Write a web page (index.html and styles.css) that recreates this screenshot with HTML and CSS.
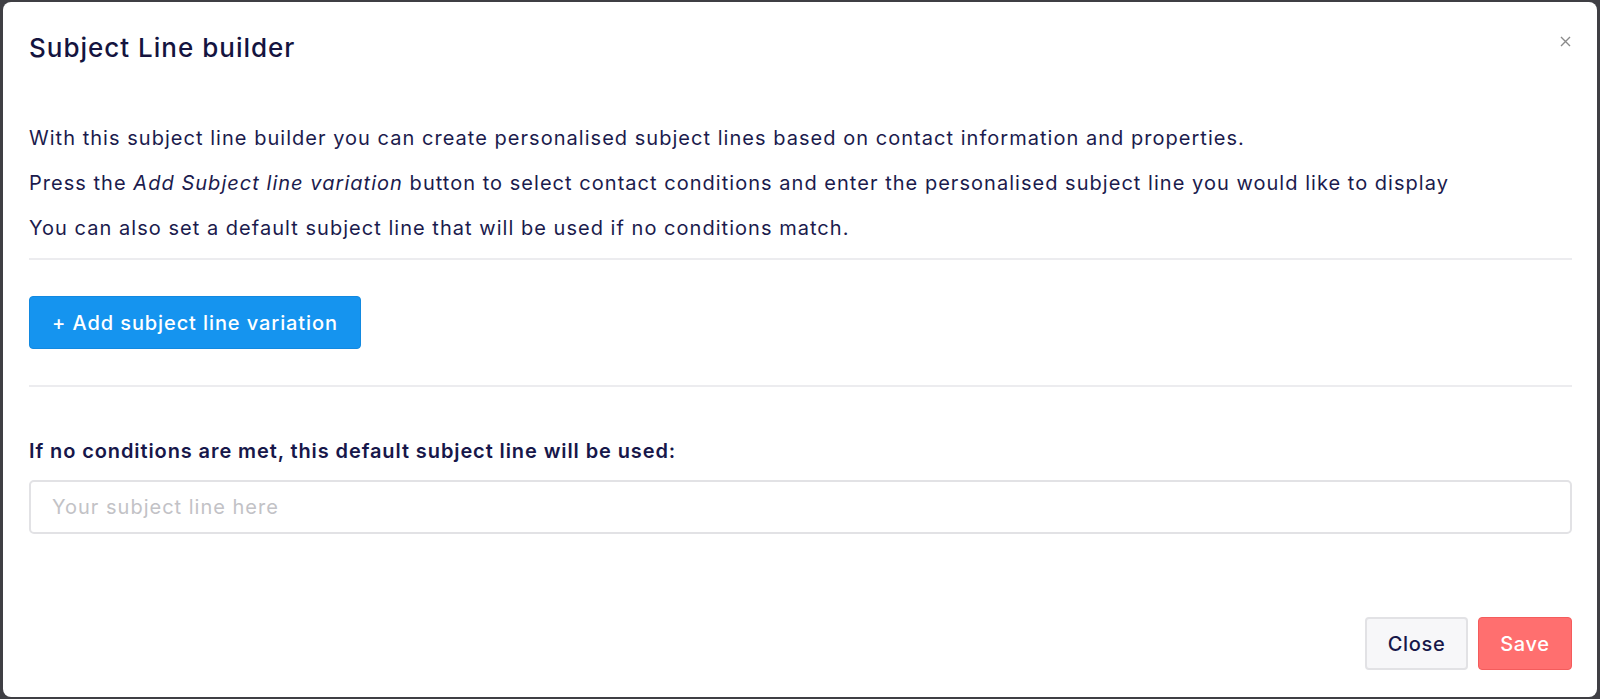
FILE: index.html
```html
<!DOCTYPE html>
<html lang="en">
<head>
<meta charset="utf-8">
<title>Subject Line builder</title>
<link rel="stylesheet" href="styles.css">
</head>
<body>
<div class="modal">
  <div class="modal-header">
    <h2 class="modal-title">Subject Line builder</h2>
    <button class="close" aria-label="Close">
      <svg width="11" height="11" viewBox="0 0 11 11"><path d="M1 1L10 10M10 1L1 10" stroke="#8a8a8a" stroke-width="1.4" fill="none"/></svg>
    </button>
  </div>
  <div class="modal-body">
    <p class="intro">With this subject line builder you can create personalised subject lines based on contact information and properties.</p>
    <p class="intro">Press the <em>Add Subject line variation</em> button to select contact conditions and enter the personalised subject line you would like to display</p>
    <p class="intro">You can also set a default subject line that will be used if no conditions match.</p>
    <hr class="divider">
    <div class="actions">
      <button class="btn btn-primary">+ Add subject line variation</button>
    </div>
    <hr class="divider">
    <label class="field-label" for="default-subject">If no conditions are met, this default subject line will be used:</label>
    <input class="field-input" id="default-subject" type="text" placeholder="Your subject line here">
  </div>
  <div class="modal-footer">
    <button class="btn btn-light">Close</button>
    <button class="btn btn-danger">Save</button>
  </div>
</div>
</body>
</html>
```
FILE: styles.css
```css
html, body {
  margin: 0;
  padding: 0;
  height: 100%;
}
body {
  background: #3f3f44;
  font-family: Inter, "Noto Sans", "Liberation Sans", sans-serif;
  color: #17174a;
  padding: 2px 3px 2px 3px;
  box-sizing: border-box;
  height: 699px;
  overflow: hidden;
}
.modal {
  background: #ffffff;
  border-radius: 8px;
  height: 695px;
  display: flex;
  flex-direction: column;
  box-sizing: border-box;
  padding: 0 25px 0 26px;
}
.modal-header {
  position: relative;
  padding-top: 31px;
}
.modal-title {
  margin: 0;
  font-size: 26px;
  line-height: 30px;
  font-weight: 500;
  color: #14143f;
  letter-spacing: 1px;
}
.close {
  position: absolute;
  top: 34px;
  right: 1px;
  border: 0;
  background: none;
  padding: 0;
  width: 11px;
  height: 11px;
  display: flex;
}
.modal-body {
  padding-top: 53px;
}
.intro {
  margin: 0;
  font-size: 20px;
  line-height: 45px;
  letter-spacing: 1.03px;
  color: #1b1b4d;
}
.intro em {
  font-style: italic;
}
.divider {
  border: 0;
  border-top: 2px solid #ececef;
  margin: 7px 0 0 0;
}
.actions {
  padding: 36px 0 36px 0;
}
.btn {
  font-family: inherit;
  font-size: 20px;
  border-radius: 4px;
  cursor: pointer;
  height: 53px;
  box-sizing: border-box;
  letter-spacing: 0.65px;
}
.btn-primary {
  background: #1594ef;
  border: 1px solid #1289e0;
  color: #ffffff;
  font-weight: 500;
  width: 332px;
  padding: 0;
  letter-spacing: 0.9px;
}
.actions + .divider {
  margin-top: 0;
}
.field-label {
  display: block;
  margin-top: 51px;
  font-size: 20px;
  line-height: 27px;
  font-weight: 600;
  color: #17174a;
  letter-spacing: 0.9px;
}
.field-input {
  display: block;
  box-sizing: border-box;
  width: 100%;
  height: 54px;
  margin-top: 15px;
  border: 2px solid #e2e2e5;
  border-radius: 5px;
  padding: 0 21px;
  font-family: inherit;
  font-size: 20px;
  letter-spacing: 1px;
  color: #17174a;
  outline: none;
}
.field-input::placeholder {
  color: #c2c2c6;
}
.modal-footer {
  margin-top: auto;
  display: flex;
  justify-content: flex-end;
  gap: 10px;
  padding-bottom: 27px;
}
.btn-light {
  width: 103px;
  background: #f7f7f9;
  border: 2px solid #e2e2e5;
  color: #17174a;
  font-weight: 500;
}
.btn-danger {
  width: 94px;
  background: #ff6f6f;
  border: 1px solid #f45c5c;
  color: #ffffff;
  font-weight: 500;
}
```
